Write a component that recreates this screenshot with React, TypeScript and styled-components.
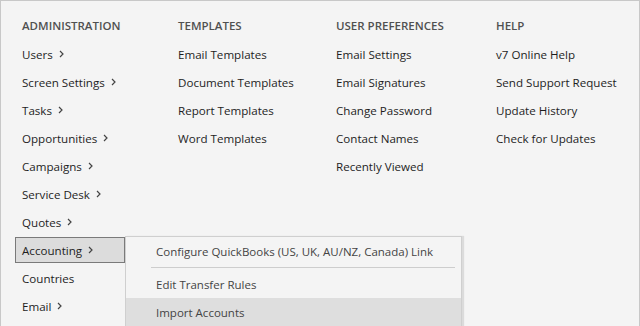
import React from 'react'
import styled, { createGlobalStyle } from 'styled-components'

const GlobalStyle = createGlobalStyle`
  html, body {
    margin: 0;
    padding: 0;
    background: #f4f4f4;
  }
  body {
    font-family: 'Open Sans', 'Noto Sans', sans-serif;
  }
`

type Item = { label: string; sub?: boolean }
type Column = { title: string; items: Item[] }

const columns: Column[] = [
  {
    title: 'ADMINISTRATION',
    items: [
      { label: 'Users', sub: true },
      { label: 'Screen Settings', sub: true },
      { label: 'Tasks', sub: true },
      { label: 'Opportunities', sub: true },
      { label: 'Campaigns', sub: true },
      { label: 'Service Desk', sub: true },
      { label: 'Quotes', sub: true },
      { label: 'Accounting', sub: true },
      { label: 'Countries' },
      { label: 'Email', sub: true },
    ],
  },
  {
    title: 'TEMPLATES',
    items: [
      { label: 'Email Templates' },
      { label: 'Document Templates' },
      { label: 'Report Templates' },
      { label: 'Word Templates' },
    ],
  },
  {
    title: 'USER PREFERENCES',
    items: [
      { label: 'Email Settings' },
      { label: 'Email Signatures' },
      { label: 'Change Password' },
      { label: 'Contact Names' },
      { label: 'Recently Viewed' },
    ],
  },
  {
    title: 'HELP',
    items: [
      { label: 'v7 Online Help' },
      { label: 'Send Support Request' },
      { label: 'Update History' },
      { label: 'Check for Updates' },
    ],
  },
]

const Frame = styled.div`
  box-sizing: border-box;
  width: 640px;
  height: 326px;
  overflow: hidden;
  border: 1px solid #c8c8c8;
  border-bottom: none;
  background: #f4f4f4;
  padding: 11px 0 0 14px;
  display: grid;
  grid-template-columns: 156px 158px 160px 1fr;
`

const Col = styled.div`
  display: flex;
  flex-direction: column;
`

const Header = styled.div`
  height: 28px;
  line-height: 28px;
  padding-left: 7px;
  font-size: 11.5px;
  font-weight: 600;
  color: #505050;
`

const Row = styled.div<{ $active?: boolean }>`
  position: relative;
  box-sizing: border-box;
  height: 26px;
  margin: 1px 0;
  display: flex;
  align-items: center;
  align-self: flex-start;
  width: ${(p) => (p.$active ? '110px' : 'auto')};
  padding: 0 6px;
  font-size: 11.6px;
  color: #1e1e1e;
  white-space: nowrap;
  border: 1px solid ${(p) => (p.$active ? '#7a7a7a' : 'transparent')};
  background: ${(p) => (p.$active ? '#dcdcdc' : 'transparent')};
`

const Chevron = styled.svg`
  margin-left: 6px;
  width: 5px;
  height: 8px;
  flex: none;
`

const SubMenu = styled.div`
  position: absolute;
  left: 109px;
  top: -2px;
  width: 337px;
  box-sizing: border-box;
  background: #f4f4f4;
  border: 1px solid #cfcfcf;
  border-bottom: none;
  box-shadow: 2px 0 1px rgba(0, 0, 0, 0.1);
  z-index: 2;
`

const SubItem = styled.div<{ $hover?: boolean }>`
  height: 28px;
  display: flex;
  align-items: center;
  padding-left: 30px;
  font-size: 11.5px;
  color: #444;
  background: ${(p) => (p.$hover ? '#dedede' : 'transparent')};
`

const Separator = styled.div`
  height: 1px;
  background: #cdcdcd;
  margin: 2px 6px 2px 25px;
`

const ChevronIcon = () => (
  <Chevron viewBox="0 0 5 8">
    <path d="M1 1 L4 4 L1 7" fill="none" stroke="#444" strokeWidth="1.2" />
  </Chevron>
)

const App: React.FC = () => (
  <>
    <GlobalStyle />
    <Frame>
      {columns.map((col) => (
        <Col key={col.title}>
          <Header>{col.title}</Header>
          {col.items.map((item) => {
            const active = item.label === 'Accounting'
            return (
              <Row key={item.label} $active={active}>
                {item.label}
                {item.sub && <ChevronIcon />}
                {active && (
                  <SubMenu>
                    <SubItem>Configure QuickBooks (US, UK, AU/NZ, Canada) Link</SubItem>
                    <Separator />
                    <SubItem>Edit Transfer Rules</SubItem>
                    <SubItem $hover>Import Accounts</SubItem>
                  </SubMenu>
                )}
              </Row>
            )
          })}
        </Col>
      ))}
    </Frame>
  </>
)

export default App
